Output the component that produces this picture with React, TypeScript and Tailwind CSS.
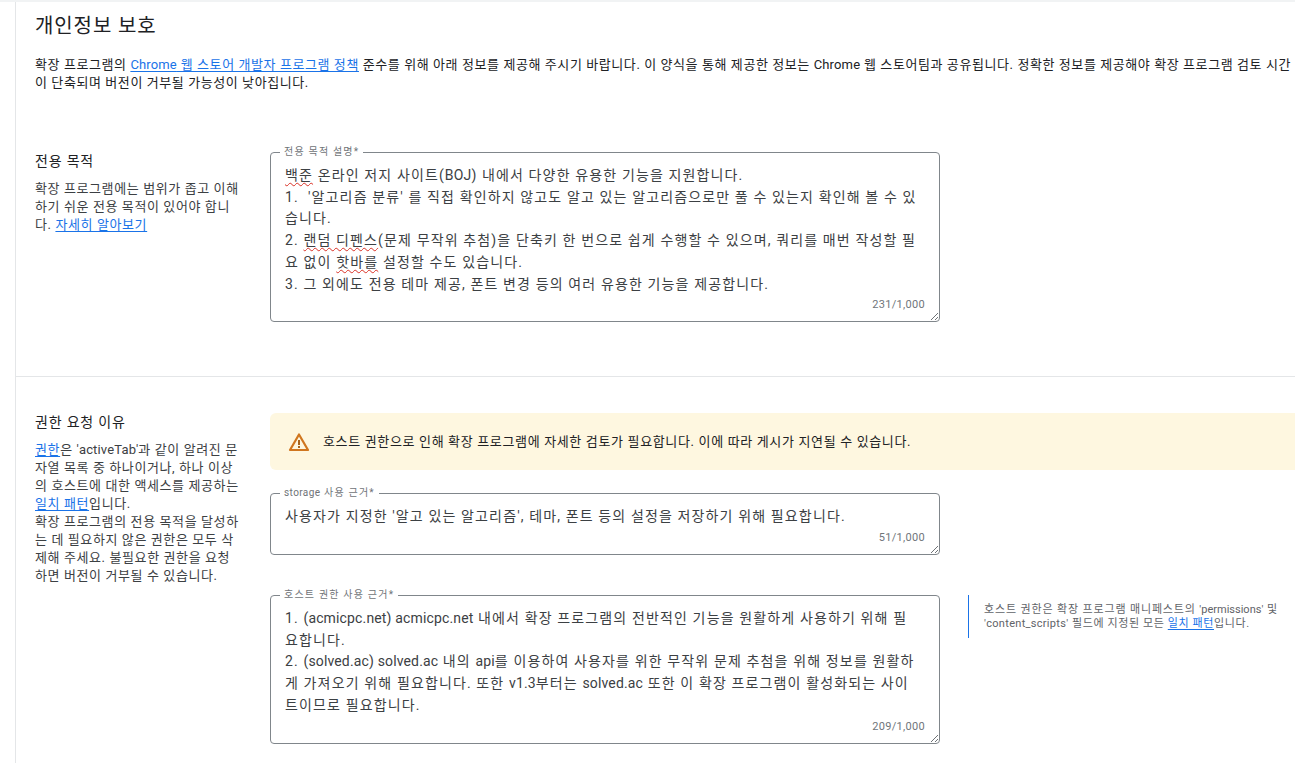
import type { ReactNode } from "react";

const font = { fontFamily: '"Roboto", "Noto Sans CJK KR", sans-serif' };

function A({ children }: { children: ReactNode }) {
  return <a className="text-[#1a73e8] underline underline-offset-2">{children}</a>;
}

// latin runs sit tighter than the hangul around them
function L({ children }: { children: ReactNode }) {
  return <span className="tracking-[0.15px]">{children}</span>;
}

function Squiggle({ children }: { children: ReactNode }) {
  return <span className="underline decoration-wavy decoration-[#d93025] decoration-1 underline-offset-2">{children}</span>;
}

interface FieldProps {
  label: ReactNode;
  count: string;
  height: string;
  children: ReactNode;
}

function Field({ label, count, height, children }: FieldProps) {
  return (
    <div className={`relative w-[670px] ${height} rounded-[4px] border border-[#80868b] pl-[14px] pr-[12px] pt-[12px]`}>
      <span className="absolute -top-[7px] left-[9px] bg-white px-[4px] text-[10px] leading-[12px] tracking-[1.2px] text-[#6f7377]">{label}</span>
      <div className="whitespace-nowrap text-[14px] leading-[21.7px] tracking-[1.13px] text-[#3c4043]">{children}</div>
      <span className="absolute bottom-[10px] right-[14px] text-[11px] leading-[12px] tracking-[0.3px] text-[#70757a]">{count}</span>
      <svg className="absolute bottom-0 right-0" width="10" height="10" viewBox="0 0 10 10" fill="none" stroke="#5f6368" strokeWidth="0.9">
        <path d="M2 9 9 2M6 9 9 6" />
      </svg>
    </div>
  );
}

function Side({ title, children }: { title: string; children: ReactNode }) {
  return (
    <div className="w-[235px] shrink-0">
      <h3 className="text-[14px] leading-[18px] tracking-[0.8px] text-[#202124]">{title}</h3>
      <p className="mt-[10px] whitespace-nowrap text-[13px] leading-[18px] tracking-[0.6px] text-[#3c4043]">{children}</p>
    </div>
  );
}

export default function App() {
  return (
    <div className="h-[763px] w-[1295px] overflow-hidden bg-white" style={font}>
      <div className="h-[2px] bg-[#f1f3f4]" />
      <div className="ml-[15px] h-[761px] w-[1340px] border-l border-[#e4e6e8]">
        {/* Header */}
        <div className="pl-[19px] pt-[10px]">
          <h2 className="text-[20px] leading-[28px] tracking-[0.9px] text-[#202124]">개인정보 보호</h2>
          <p className="mt-[16px] whitespace-nowrap text-[13px] leading-[18px] tracking-[0.58px] text-[#202124]">
            확장 프로그램의 <A><L>Chrome</L> 웹 스토어 개발자 프로그램 정책</A> 준수를 위해 아래 정보를 제공해 주시기 바랍니다. 이 양식을 통해 제공한 정보는 <L>Chrome</L> 웹 스토어팀과 공유됩니다. 정확한 정보를 제공해야 확장 프로그램 검토 시간
            <br />이 단축되며 버전이 거부될 가능성이 낮아집니다.
          </p>
        </div>

        {/* Single purpose */}
        <section className="flex h-[285px] border-b border-[#e4e6e8] pl-[19px] pt-[60px]">
          <Side title="전용 목적">
            확장 프로그램에는 범위가 좁고 이해
            <br />하기 쉬운 전용 목적이 있어야 합니
            <br />다. <A>자세히 알아보기</A>
          </Side>
          <div>
            <Field label="전용 목적 설명*" count="231/1,000" height="h-[170px]">
              <Squiggle>백준</Squiggle> 온라인 저지 사이트(<L>BOJ</L>) 내에서 다양한 유용한 기능을 지원합니다.
              <br />1.&nbsp; '알고리즘 분류' 를 직접 확인하지 않고도 알고 있는 알고리즘으로만 풀 수 있는지 확인해 볼 수 있
              <br />습니다.
              <br />2. <Squiggle>랜덤 디펜스</Squiggle>(문제 무작위 추첨)을 단축키 한 번으로 쉽게 수행할 수 있으며, 쿼리를 매번 작성할 필
              <br />요 없이 <Squiggle>핫바를</Squiggle> 설정할 수도 있습니다.
              <br />3. 그 외에도 전용 테마 제공, 폰트 변경 등의 여러 유용한 기능을 제공합니다.
            </Field>
          </div>
        </section>

        {/* Permissions */}
        <section className="flex pl-[19px] pt-[36px]">
          <Side title="권한 요청 이유">
            <A>권한</A>은 <L>'activeTab'</L>과 같이 알려진 문
            <br />자열 목록 중 하나이거나, 하나 이상
            <br />의 호스트에 대한 액세스를 제공하는
            <br /><A>일치 패턴</A>입니다.
            <br />확장 프로그램의 전용 목적을 달성하
            <br />는 데 필요하지 않은 권한은 모두 삭
            <br />제해 주세요. 불필요한 권한을 요청
            <br />하면 버전이 거부될 수 있습니다.
          </Side>
          <div className="flex-1">
            <div className="flex h-[57px] items-center rounded-[6px] bg-[#fef7e0] pl-[18px]">
              <svg width="22" height="20" viewBox="0 0 22 20" fill="none" className="shrink-0">
                <path d="M11 2.5 20 18H2L11 2.5Z" stroke="#d0761f" strokeWidth="2.2" strokeLinejoin="round" />
                <path d="M10 8h2v5h-2zM10 14h2v2h-2z" fill="#a8651f" />
              </svg>
              <span className="ml-[13px] text-[13px] tracking-[0.65px] text-[#202124]">
                호스트 권한으로 인해 확장 프로그램에 자세한 검토가 필요합니다. 이에 따라 게시가 지연될 수 있습니다.
              </span>
            </div>
            <div className="mt-[23px]">
              <Field label={<><span className="tracking-[0.4px]">storage</span> 사용 근거*</>} count="51/1,000" height="h-[62px]">
                사용자가 지정한 '알고 있는 알고리즘', 테마, 폰트 등의 설정을 저장하기 위해 필요합니다.
              </Field>
            </div>
            <div className="mt-[40px] flex items-start">
              <Field label="호스트 권한 사용 근거*" count="209/1,000" height="h-[149px]">
                1. <L>(acmicpc.net) acmicpc.net</L> 내에서 확장 프로그램의 전반적인 기능을 원활하게 사용하기 위해 필
                <br />요합니다.
                <br />2. <L>(solved.ac) solved.ac</L> 내의 <L>api</L>를 이용하여 사용자를 위한 무작위 문제 추첨을 위해 정보를 원활하
                <br />게 가져오기 위해 필요합니다. 또한 <L>v1.3</L>부터는 <L>solved.ac</L> 또한 이 확장 프로그램이 활성화되는 사이
                <br />트이므로 필요합니다.
              </Field>
              <div className="ml-[28px] flex h-[43px] items-center whitespace-nowrap border-l border-[#1a73e8] pl-[15px] text-[11px] leading-[14px] tracking-[0.85px] text-[#5f6368]">
                <p>
                  호스트 권한은 확장 프로그램 매니페스트의 <span className="tracking-[0px]">'permissions'</span> 및
                  <br /><span className="tracking-[0.3px]">'content_scripts'</span> <span className="tracking-[0.6px]">필드에 지정된 모든 <A>일치 패턴</A>입니다.</span>
                </p>
              </div>
            </div>
          </div>
        </section>
      </div>
    </div>
  );
}
